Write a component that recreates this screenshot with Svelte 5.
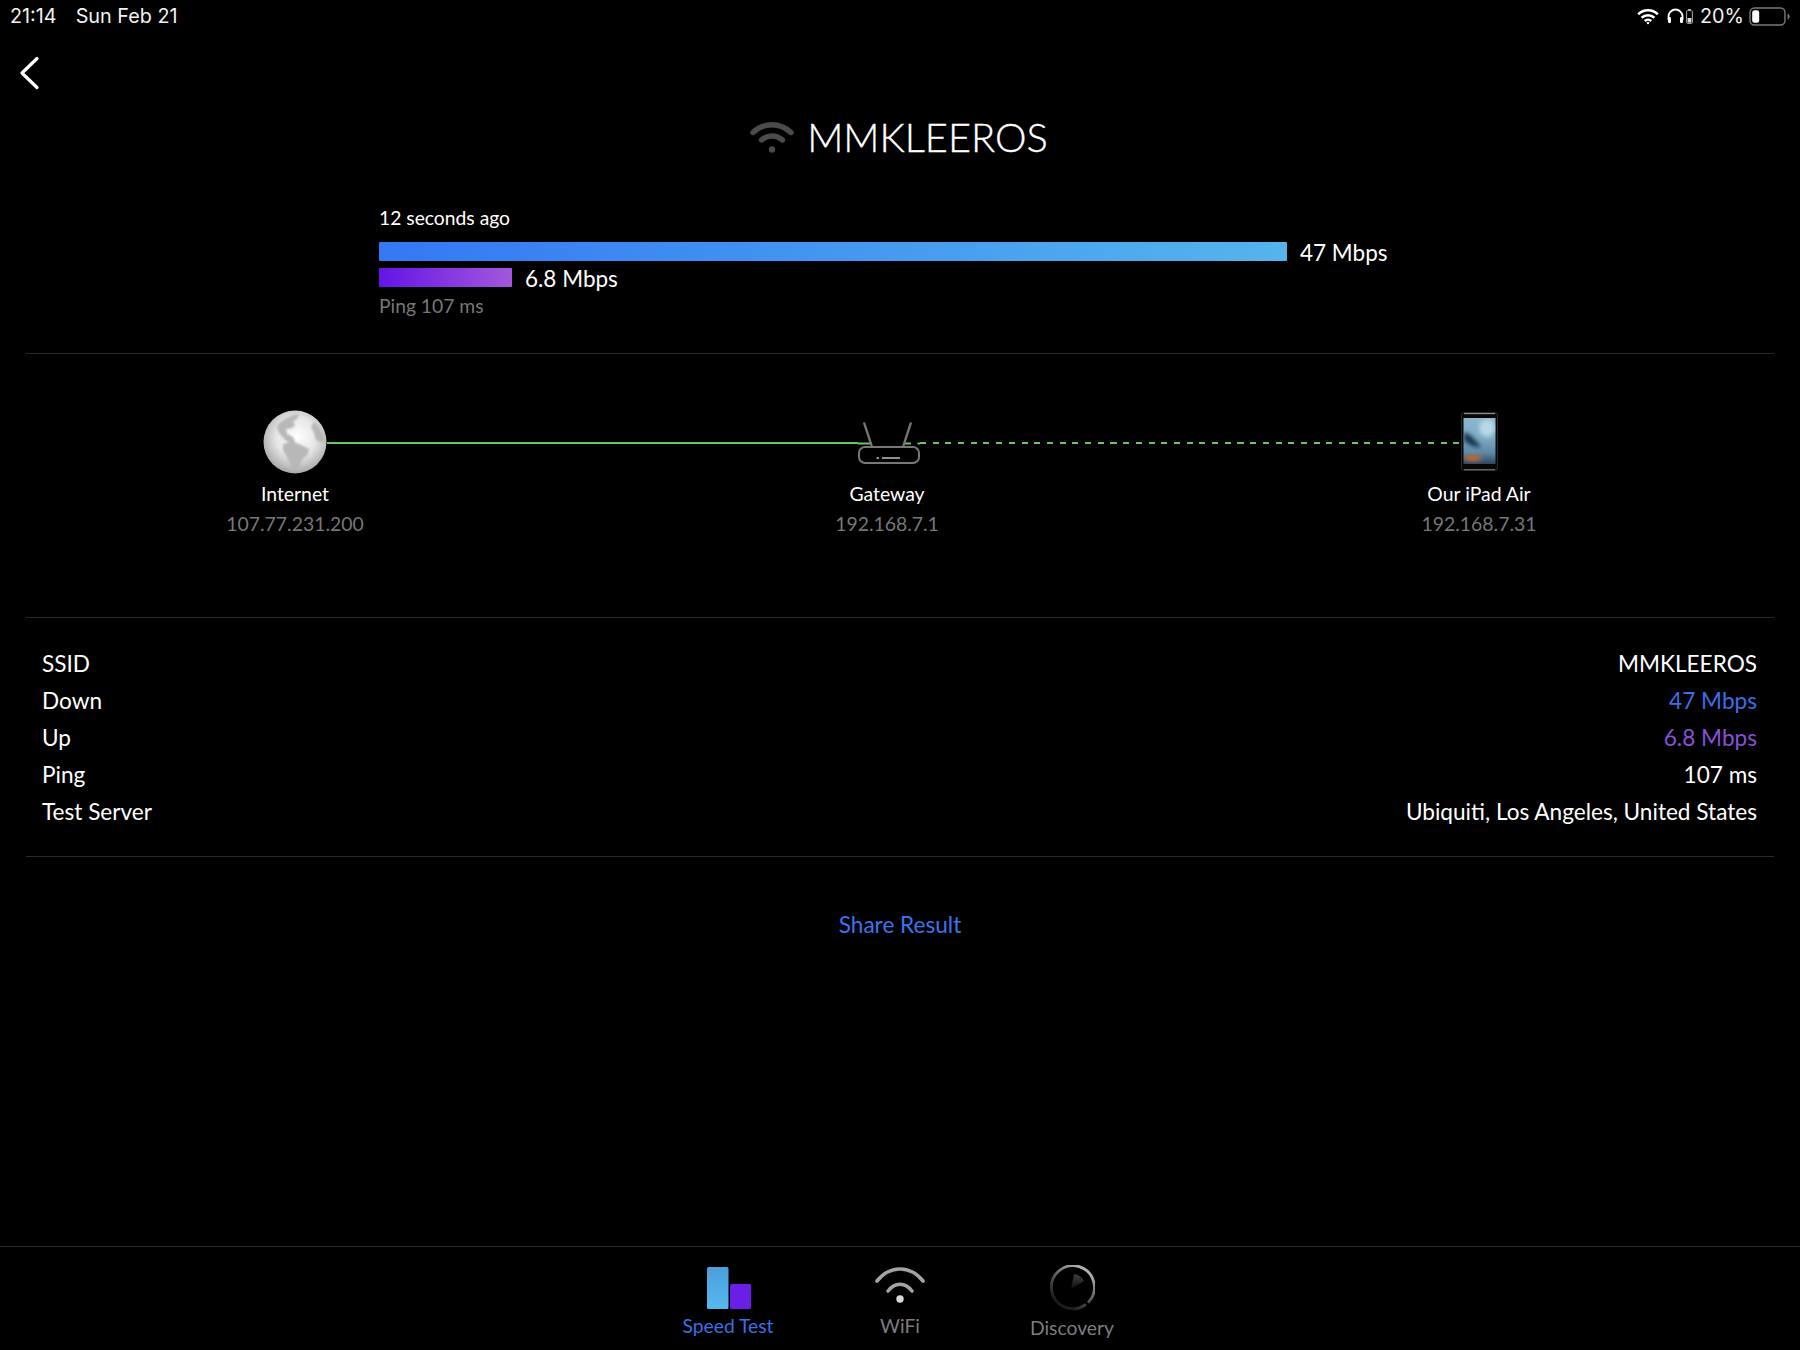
<script>
  const details = [
    { label: "SSID", value: "MMKLEEROS", tone: "" },
    { label: "Down", value: "47 Mbps", tone: "down" },
    { label: "Up", value: "6.8 Mbps", tone: "up" },
    { label: "Ping", value: "107 ms", tone: "" },
    { label: "Test Server", value: "Ubiquiti, Los Angeles, United States", tone: "" }
  ];
</script>

<div class="screen">
  <header class="status">
    <div class="clock"><span>21:14</span><span>Sun Feb 21</span></div>
    <div class="indicators">
      <svg width="22" height="17" viewBox="0 0 22 17" fill="none" stroke="#fff" stroke-width="2.6">
        <path d="M1.2 6.2a14 14 0 0 1 19.6 0" />
        <path d="M4.6 9.8a9.2 9.2 0 0 1 12.8 0" />
        <path d="M7.8 13a4.6 4.6 0 0 1 6.4 0" />
        <circle cx="11" cy="15" r="1.2" fill="#fff" stroke="none" />
      </svg>
      <svg class="phones" width="17" height="16" viewBox="0 0 17 16" fill="none" stroke="#fff" stroke-width="1.8">
        <path d="M1.5 12V8.5a7 7 0 0 1 14 0V12" />
        <rect x="1" y="9" width="3" height="6" rx="1.2" fill="#fff" stroke="none" />
        <rect x="13" y="9" width="3" height="6" rx="1.2" fill="#fff" stroke="none" />
      </svg>
      <svg class="cell" width="7" height="15" viewBox="0 0 7 15">
        <rect x="2" y="0" width="3" height="1.6" fill="#aaa" />
        <rect x="0.6" y="1.6" width="5.8" height="12.8" rx="1" fill="none" stroke="#aaa" stroke-width="1" />
        <rect x="1.6" y="9" width="3.8" height="4.6" fill="#ddd" />
      </svg>
      <span class="pct">20%</span>
      <svg class="batt" width="41" height="19" viewBox="0 0 41 19">
        <rect x="1" y="1" width="35" height="17" rx="4.5" fill="none" stroke="#7a7a7a" stroke-width="1.4" />
        <rect x="3.2" y="3.2" width="7" height="12.6" rx="2.4" fill="#fff" />
        <path d="M38.6 6.5 c1.4 .6 2 1.8 2 3 s-.6 2.4 -2 3z" fill="#7a7a7a" />
      </svg>
    </div>
  </header>

  <div class="nav">
    <svg width="24" height="36" viewBox="0 0 24 36" fill="none" stroke="#fff" stroke-width="3.2" stroke-linecap="round" stroke-linejoin="round">
      <path d="M19 3.5 4 18l15 14.500" />
    </svg>
  </div>

  <h1 class="title">
    <svg width="44" height="33" viewBox="0 0 44 33" fill="none" stroke="#4b4b4e" stroke-width="5.4" stroke-linecap="round">
      <path d="M3 12.5c11-10.400 27-10.400 38 0" />
      <path d="M11.500 20c6-5.400 15-5.400 21 0" />
      <circle cx="22" cy="29.500" r="3.200" fill="#4b4b4e" stroke="none" />
    </svg>
    <span>MMKLEEROS</span>
  </h1>

  <section class="summary">
    <div class="ago">12 seconds ago</div>
    <div class="bar-row down-row">
      <div class="bar bar-down"></div>
      <span>47 Mbps</span>
    </div>
    <div class="bar-row up-row">
      <div class="bar bar-up"></div>
      <span>6.8 Mbps</span>
    </div>
    <div class="ping">Ping 107 ms</div>
  </section>

  <section class="topology">
    <div class="links">
      <svg width="64" height="64" viewBox="0 0 64 64">
        <defs>
          <radialGradient id="globe" cx="0.52" cy="0.42" r="0.58">
            <stop offset="0" stop-color="#ffffff" />
            <stop offset="0.55" stop-color="#e6e6e6" />
            <stop offset="1" stop-color="#a8a8a8" />
          </radialGradient>
          <filter id="land"><feGaussianBlur stdDeviation="0.8" /></filter>
        </defs>
        <circle cx="32" cy="32" r="31.500" fill="url(#globe)" />
        <g fill="#b8b8b8" filter="url(#land)">
          <path d="M14 16c5-6 13-11 22-12l-2 5-4 2 2 4-3 3-6 1 1 5 6 3 3 7-5 0-6-4-6-7-2-5z" />
          <path d="M20 34c6-2 14-2 20 2l6 3-1 5-6 6-3 8-6 3-3-8-4-7-3-6z" />
          <path d="M51 12c5 4 9 10 11 18l-3 3-6-3-2-8-3-5z" />
        </g>
      </svg>
      <div class="line solid"></div>
      <svg class="router" width="62" height="42" viewBox="0 0 62 42" fill="none" stroke="#77777a" stroke-width="2">
        <path d="M0 21.500h14M47 21.500h6M59.500 21.500h2.500" stroke="#6cc46c" stroke-width="1.800" />
        <path d="M6 0.500 14 25M53 0.500 45 25" stroke-width="2.400" />
        <rect x="1" y="25" width="60" height="16" rx="6" />
        <path d="M18.500 36h2.500M24 36h18" stroke="#909093" />
      </svg>
      <div class="line dashed"></div>
      <svg width="37" height="60" viewBox="0 0 37 60">
        <defs>
          <linearGradient id="sky" x1="0" y1="0" x2="0" y2="1">
            <stop offset="0" stop-color="#8db8cf" />
            <stop offset="0.45" stop-color="#7ba8c2" />
            <stop offset="0.75" stop-color="#5f8aa8" />
            <stop offset="1" stop-color="#2c4560" />
          </linearGradient>
          <filter id="soft"><feGaussianBlur stdDeviation="2" /></filter>
          <clipPath id="glass"><rect x="2.500" y="6" width="32" height="46" /></clipPath>
        </defs>
        <rect x="0.500" y="0.500" width="36" height="58" rx="2.500" fill="#060606" stroke="#2c2c2c" />
        <rect x="3" y="1" width="31" height="1.200" fill="#8a8a8a" />
        <rect x="2.500" y="6" width="32" height="46" fill="url(#sky)" />
        <g filter="url(#soft)" clip-path="url(#glass)">
          <path d="M3 20c8 3 12 9 17 15-7 1-13-3-17-6z" fill="#12304c" />
          <ellipse cx="26" cy="16" rx="8" ry="9" fill="#b8d8e4" />
          <ellipse cx="12" cy="46" rx="9" ry="3" fill="#c9682f" />
        </g>
        <rect x="3" y="57" width="31" height="1.200" fill="#666" />
      </svg>
    </div>
    <div class="nodes">
      <div class="node"><div class="name">Internet</div><div class="addr">107.77.231.200</div></div>
      <div class="node"><div class="name">Gateway</div><div class="addr">192.168.7.1</div></div>
      <div class="node"><div class="name">Our iPad Air</div><div class="addr">192.168.7.31</div></div>
    </div>
  </section>

  <section class="details">
    {#each details as row}
      <div class="row">
        <span>{row.label}</span>
        <span class={row.tone}>{row.value}</span>
      </div>
    {/each}
  </section>

  <div class="share">Share Result</div>

  <nav class="tabs">
    <div class="tab active">
      <svg width="44" height="42" viewBox="0 0 44 42">
        <defs>
          <linearGradient id="tall" x1="0" y1="0" x2="0" y2="1">
            <stop offset="0" stop-color="#4b9fdc" />
            <stop offset="1" stop-color="#56b9ee" />
          </linearGradient>
        </defs>
        <rect x="0" y="0" width="21.500" height="42" rx="1.500" fill="url(#tall)" />
        <rect x="23" y="17" width="21" height="25" rx="1.500" fill="#6a1fe6" />
      </svg>
      <span>Speed Test</span>
    </div>
    <div class="tab">
      <svg width="52" height="42" viewBox="0 0 52 42" fill="none" stroke="#a3a3a6" stroke-width="3.600" stroke-linecap="round">
        <path d="M3 14C16-2 36-2 49 14" />
        <path d="M14 24C21 15 31 15 38 24" />
        <circle cx="26" cy="32" r="3.700" fill="#d8d8d8" stroke="none" />
      </svg>
      <span>WiFi</span>
    </div>
    <div class="tab disc">
      <svg width="46" height="46" viewBox="0 0 46 46" fill="none">
        <defs>
          <linearGradient id="dial" gradientUnits="userSpaceOnUse" x1="23" y1="46" x2="46" y2="12">
            <stop offset="0" stop-color="#1c1c1c" />
            <stop offset="0.5" stop-color="#5c5c5c" />
            <stop offset="1" stop-color="#b0b0b0" />
          </linearGradient>
          <linearGradient id="wedge" x1="0.600" y1="0" x2="0.400" y2="1">
            <stop offset="0" stop-color="#404040" />
            <stop offset="1" stop-color="#101010" />
          </linearGradient>
        </defs>
        <path d="M25 9c4 .6 8 3 10 7L22 24z" fill="url(#wedge)" />
        <path d="M36 40A21.500 21.500 0 1 1 39.700 36.800" stroke="url(#dial)" stroke-width="2.800" stroke-linecap="round" />
      </svg>
      <span>Discovery</span>
    </div>
  </nav>
</div>

<style>
  :global(body) { margin: 0; background: #000; }

  .screen {
    width: 1800px;
    height: 1350px;
    background: #000;
    color: #fff;
    font-family: Lato, "Open Sans", sans-serif;
    display: flex;
    flex-direction: column;
    overflow: hidden;
  }

  .status {
    height: 32px;
    display: flex;
    justify-content: space-between;
    align-items: center;
    padding: 0 11px 0 10px;
    font-family: Inter, Roboto, sans-serif;
    font-size: 19.800px;
    color: #f2f2f2;
  }
  .clock { display: flex; gap: 19px; }
  .indicators { display: flex; align-items: center; }
  .phones { margin-left: 8px; }
  .cell { margin-left: 2px; }
  .pct { margin-left: 7px; }
  .batt { margin-left: 5px; margin-right: -1px; }

  .nav { height: 38px; padding: 23px 0 0 18px; }

  .title {
    margin: 18px 0 0;
    height: 50px;
    display: flex;
    justify-content: center;
    align-items: center;
    gap: 13px;
    font-size: 39.800px;
    font-weight: 300;
    -webkit-text-stroke: 0.35px #fff;
    padding-right: 2px;
  }

  .summary {
    margin: 45px 26px 0;
    padding: 0 0 35px 353px;
    border-bottom: 1px solid #2a2a2c;
  }
  .ago { font-size: 19.300px; line-height: 24px; height: 35px; }
  .bar-row { display: flex; align-items: center; font-size: 22.500px; gap: 13px; }
  .bar-row span { padding-top: 2px; }
  .down-row { height: 20px; }
  .up-row { height: 20px; margin-top: 6px; }
  .bar { height: 19px; border-radius: 1px; }
  .bar-down { width: 908px; background: linear-gradient(90deg, #3478f4, #55b5ec); }
  .bar-up { width: 133px; background: linear-gradient(90deg, #6414e6, #a458dc); }
  .ping { font-size: 19.300px; color: #77777a; margin-top: 7px; line-height: 24px; }

  .topology {
    margin: 0 26px;
    height: 264px;
    border-bottom: 1px solid #2a2a2c;
    box-sizing: border-box;
    padding-top: 56px;
  }
  .links {
    display: flex;
    align-items: center;
    padding: 0 276px 0 237px;
    height: 64px;
  }
  .line { height: 2px; margin-top: 2px; }
  .router { margin-top: 2px; }
  .solid { flex: 0 0 531px; background: #6cc46c; }
  .dashed {
    flex: 1;
    background: repeating-linear-gradient(90deg, #6cc46c 0 6px, transparent 6px 12.700px);
  }
  .nodes {
    display: grid;
    grid-template-columns: repeat(3, 200px);
    justify-content: space-between;
    padding: 0 195px 0 169px;
    margin-top: 5px;
    text-align: center;
  }
  .name { font-size: 19.400px; line-height: 30px; }
  .addr { font-size: 19.400px; line-height: 30px; color: #77777a; }

  .details {
    margin: 0 26px;
    padding: 27px 17px 26px 16px;
    border-bottom: 1px solid #2a2a2c;
    font-size: 22.600px;
  }
  .row {
    display: flex;
    justify-content: space-between;
    height: 37px;
    line-height: 37px;
  }
  .down { color: #3b6fe8; }
  .up { color: #8a50d6; }

  .share {
    margin-top: 50px;
    text-align: center;
    font-size: 22.600px;
    line-height: 36px;
    color: #3b74ee;
  }

  .tabs {
    margin-top: auto;
    height: 104px;
    border-top: 1px solid #2a2a2c;
    box-sizing: border-box;
    display: flex;
    justify-content: center;
    font-size: 19.300px;
    color: #7d7d80;
  }
  .tab {
    width: 172px;
    display: flex;
    flex-direction: column;
    align-items: center;
    padding-top: 20px;
    box-sizing: border-box;
  }
  .tab svg { display: block; margin-bottom: 5px; flex: none; }
  .tab.disc { padding-top: 18px; }
  .tab.active { color: #3b6fe8; }
  .tab.active svg { margin-left: 2px; }
</style>
